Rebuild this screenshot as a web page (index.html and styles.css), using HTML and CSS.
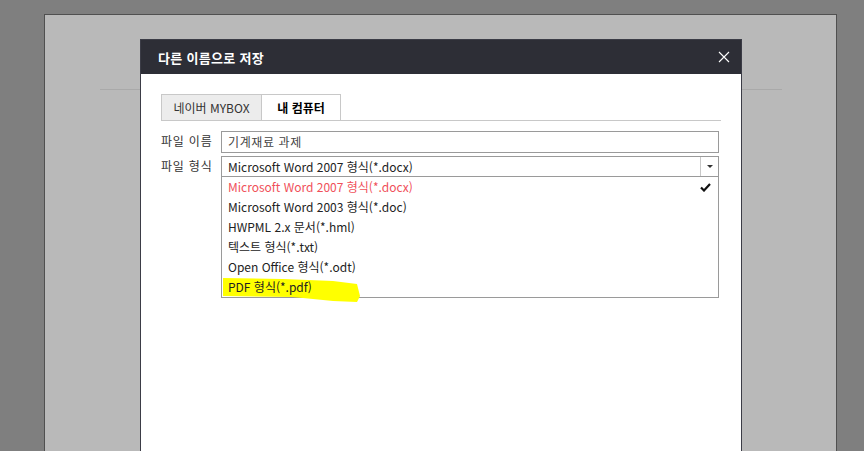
FILE: index.html
```html
<!DOCTYPE html>
<html lang="ko">
<head>
    <meta charset="UTF-8">
    <title>다른 이름으로 저장</title>
    <link rel="stylesheet" href="styles.css">
</head>
<body>
    <div class="page">
        <div class="page-rule"></div>
    </div>

    <!-- save as dialog -->
    <div class="dialog">
        <div class="dialog-head">
            <h2>다른 이름으로 저장</h2>
            <svg class="close" width="12" height="12" viewBox="0 0 12 12">
                <path d="M1 1 L11 11 M11 1 L1 11" stroke="#fff" stroke-width="1.1" fill="none"/>
            </svg>
        </div>
        <div class="dialog-body">
            <div class="tabs">
                <div class="tab">네이버 MYBOX</div>
                <div class="tab active">내 컴퓨터</div>
            </div>

            <div class="field">
                <label>파일 이름</label>
                <div class="input">기계재료 과제</div>
            </div>
            <div class="field">
                <label>파일 형식</label>
                <div class="select-wrap">
                    <div class="select">
                        <span>Microsoft Word 2007 형식(*.docx)</span>
                        <span class="arrow"></span>
                    </div>
                    <ul class="options">
                        <li class="selected">Microsoft Word 2007 형식(*.docx)
                            <svg class="check" width="11" height="9" viewBox="0 0 11 9">
                                <path d="M1 4.5 L4 7.5 L10 1" stroke="#111" stroke-width="2.2" fill="none"/>
                            </svg>
                        </li>
                        <li>Microsoft Word 2003 형식(*.doc)</li>
                        <li>HWPML 2.x 문서(*.hml)</li>
                        <li>텍스트 형식(*.txt)</li>
                        <li>Open Office 형식(*.odt)</li>
                        <li class="marked">
                            <svg class="marker" width="140" height="28" viewBox="0 0 140 28">
                                <path d="M0 2 L60 3 L110 5 L134 8 L137 20 L134 26 L110 25 L70 21 L0 20 Z" fill="#ffff00"/>
                            </svg>
                            <span>PDF 형식(*.pdf)</span>
                        </li>
                    </ul>
                </div>
            </div>
        </div>
    </div>
</body>
</html>
```

FILE: styles.css
```css
body {
    margin: 0;
    background-color: #7f7f7f;
    font-family: "Noto Sans CJK KR", "Noto Sans", sans-serif;
    font-size: 12px;
    color: #222;
    overflow: hidden;
    height: 451px;
}

.page {
    margin: 14px 0 0 44px;
    width: 793px;
    height: 437px;
    border: 1px solid #505050;
    border-bottom: none;
    background-color: #b9b9b9;
    padding-top: 74px;
    box-sizing: border-box;
}
.page-rule {
    margin-left: 55px;
    width: 682px;
    border-top: 1px solid #a9a9a9;
}

.dialog {
    position: absolute;
    left: 140px;
    top: 39px;
    width: 602px;
    height: 412px;
    background-color: #fff;
    border: 1px solid #3b3c46;
    border-bottom: none;
    box-sizing: border-box;
}
.dialog-head {
    height: 34px;
    background-color: #2d2e36;
    display: flex;
    align-items: center;
    justify-content: space-between;
    padding: 0 11px 0 17px;
}
.dialog-head h2 {
    margin: 0;
    color: #fff;
    font-size: 13px;
    font-weight: bold;
    letter-spacing: 0.3px;
}
.close {
    display: block;
}

.dialog-body {
    padding: 20px 20px 0 20px;
}

.tabs {
    display: flex;
    border-bottom: 1px solid #c8c8c8;
    height: 26px;
}
.tab {
    width: 101px;
    box-sizing: border-box;
    border: 1px solid #c8c8c8;
    border-bottom: none;
    background-color: #ececec;
    color: #333;
    display: flex;
    align-items: center;
    justify-content: center;
    font-size: 12px;
}
.tab.active {
    width: 79px;
    border-left: none;
    background-color: #fff;
    color: #000;
    font-weight: bold;
}

.field {
    display: flex;
    margin-top: 10px;
}
.field + .field {
    margin-top: 3px;
}
.field label {
    width: 60px;
    flex: none;
    color: #333;
    line-height: 20px;
    letter-spacing: 0.8px;
}
.input {
    width: 498px;
    height: 22px;
    box-sizing: border-box;
    border: 1px solid #9a9a9a;
    padding: 0 6px;
    line-height: 20px;
    color: #444;
    letter-spacing: 0.6px;
}

.select-wrap {
    width: 498px;
}
.select {
    height: 21px;
    box-sizing: border-box;
    border: 1px solid #9a9a9a;
    display: flex;
    justify-content: space-between;
    padding-left: 6px;
    line-height: 19px;
    color: #222;
}
.arrow {
    width: 17px;
    border-left: 1px solid #c8c8c8;
    position: relative;
}
.arrow::after {
    content: "";
    position: absolute;
    left: 6px;
    top: 8px;
    border-left: 3px solid transparent;
    border-right: 3px solid transparent;
    border-top: 3px solid #333;
}

.options {
    list-style: none;
    margin: 0;
    padding: 0;
    border: 1px solid #9a9a9a;
    border-top: none;
    height: 121px;
    box-sizing: border-box;
}
.options li {
    height: 20px;
    line-height: 20px;
    padding-left: 6px;
    color: #222;
    position: relative;
}
.options li.selected {
    color: #f0505a;
    display: flex;
    justify-content: space-between;
    padding-right: 7px;
}
.check {
    margin-top: 6px;
}
.options li.marked span {
    position: relative;
}
.marker {
    position: absolute;
    left: 1px;
    top: -1px;
}
```
